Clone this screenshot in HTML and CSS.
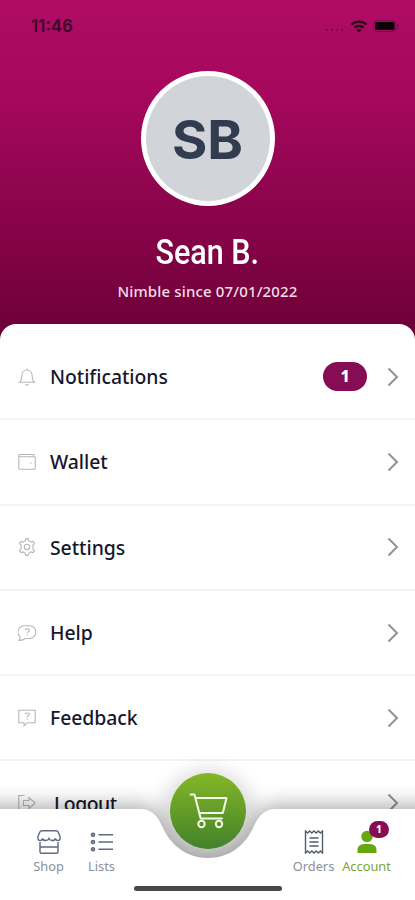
FILE: index.html
```html
<!DOCTYPE html>
<html lang="en">
  <head>
    <meta charset="UTF-8" />
    <meta name="viewport" content="width=device-width, initial-scale=1.0" />
    <title>Account</title>
    <link rel="stylesheet" href="styles.css">
  </head>
  <body>
    <div class="screen">
      <header class="profile">
        <div class="status-bar">
          <span class="time">11:46</span>
          <div class="status-icons">
            <svg width="20" height="4" viewBox="0 0 20 4" fill="#7d0a49"><circle cx="2" cy="2" r="1.200"/><circle cx="7" cy="2" r="1.200"/><circle cx="12" cy="2" r="1.200"/><circle cx="17" cy="2" r="1.200"/></svg>
            <svg class="wifi" width="18" height="13" viewBox="0 0 18 13" fill="none" stroke="#29051b" stroke-width="2.200"><path d="M1.500 4.600a11 11 0 0 1 15 0M4.400 7.700a6.800 6.800 0 0 1 9.200 0"/><path d="M9 12.400 6.500 9.900a3.800 3.800 0 0 1 5 0z" fill="#29051b" stroke="none"/></svg>
            <svg width="27" height="12" viewBox="0 0 27 12"><rect x=".6" y=".6" width="22.400" height="10.800" rx="3" fill="none" stroke="#7d0a49"/><rect x="2" y="2" width="19.500" height="8" rx="1.500" fill="#0c0208"/><path d="M24.300 4v4q1.600-.6 1.600-2t-1.600-2" fill="#7d0a49"/></svg>
          </div>
        </div>
        <div class="avatar"><span>SB</span></div>
        <h1 class="name">Sean B.</h1>
        <p class="since">Nimble since 07/01/2022</p>
      </header>

      <main class="menu">
        <a class="item">
          <svg class="icon" viewBox="0 0 18 18"><path d="M1.500 14.300c2-1.500 2.200-3.300 2.300-6.300C3.900 4.500 6 2 9 2s5.100 2.500 5.200 6c.1 3 .3 4.800 2.300 6.300zM7.400 16.200q1.600 1.800 3.200 0M9 .4V2"/></svg>
          <span class="label">Notifications</span>
          <span class="count">1</span>
          <svg class="chevron" viewBox="0 0 12 20"><path d="M1.500 1.500 10 10l-8.500 8.500"/></svg>
        </a>
        <a class="item">
          <svg class="icon" viewBox="0 0 18 18"><path d="M.8 2.200V15q0 1.300 1.300 1.300h13.800q1.300 0 1.300-1.300V5q0-1.300-1.300-1.300H2.300Q.8 3.700.8 2.200q0-.7 1-.7h14v2M13 9.500v1.200"/></svg>
          <span class="label">Wallet</span>
          <svg class="chevron" viewBox="0 0 12 20"><path d="M1.500 1.500 10 10l-8.500 8.500"/></svg>
        </a>
        <a class="item">
          <svg class="icon" viewBox="0 0 18 18"><path d="m7.300 2.700.6-2.100h2.200l.6 2.100 2.400 1.400 2.200-.6 1.200 2-1.600 1.600v3.800l1.600 1.600-1.200 2-2.200-.6-2.400 1.400-.6 2.100H7.900l-.6-2.100-2.400-1.400-2.200.6-1.200-2 1.600-1.600V7.100L1.500 5.500l1.200-2 2.200.6z"/><circle cx="9" cy="9" r="2.700"/></svg>
          <span class="label">Settings</span>
          <svg class="chevron" viewBox="0 0 12 20"><path d="M1.500 1.500 10 10l-8.500 8.500"/></svg>
        </a>
        <a class="item">
          <svg class="icon" viewBox="0 0 18 18"><path d="M6.500 1.700h5a5.800 5.800 0 0 1 0 12.800H7.200Q4.500 16.800.8 16.300q2-1.500 1.300-3.600A6.300 6.300 0 0 1 6.500 1.700zM7 6.300q0-1.400 2.200-1.400t2.200 1.400c0 1.400-2.200 1.200-2.200 3M9.200 10.500v1.100"/></svg>
          <span class="label">Help</span>
          <svg class="chevron" viewBox="0 0 12 20"><path d="M1.500 1.500 10 10l-8.500 8.500"/></svg>
        </a>
        <a class="item">
          <svg class="icon" viewBox="0 0 18 18"><path d="M.8 1.200h16.400v12.500H9.500l-3.400 3v-3H.8zM7 5.300q0-1.300 2.200-1.300t2.200 1.300c0 1.400-2.200 1.200-2.200 3M9.200 9.500v1.200"/></svg>
          <span class="label">Feedback</span>
          <svg class="chevron" viewBox="0 0 12 20"><path d="M1.500 1.500 10 10l-8.500 8.500"/></svg>
        </a>
        <a class="item item-logout">
          <svg class="icon" viewBox="0 0 18 18"><path d="M6.500 1.500H.8v15h5.700M5.500 6.500H11V3.500L17.200 9 11 14.500v-3H5.500z"/></svg>
          <span class="label">Logout</span>
          <svg class="chevron" viewBox="0 0 12 20"><path d="M1.500 1.500 10 10l-8.500 8.500"/></svg>
        </a>
      </main>

      <nav class="tab-bar">
        <svg class="tab-shape" viewBox="0 0 415 91">
          <circle class="tab-glow" cx="208" cy="9" r="48"/>
          <path class="tab-fill" d="M-30 0H140C151 0 157 6 162 17C171 37 187 49 208 49S245 37 254 17C259 6 265 0 276 0H445V91H-30Z"/>
        </svg>
        <div class="tabs">
          <a class="tab tab-shop">
            <svg width="24" height="24" viewBox="0 0 24 24" fill="none" stroke="#60687f" stroke-width="1.400"><path d="M5 .8h14q1.500 0 2.300 1.500L23 6.300v2.200q0 2-2 2t-2.600-2q-.4 2-3 2t-3.400-2q-.8 2-3.400 2t-3-2q-.6 2-2.600 2t-2-2V6.300l1.700-4Q3.500.8 5 .8zM3 12v9.700q0 1.500 1.500 1.500h15q1.500 0 1.500-1.500V12M3 17h18"/></svg>
            <span>Shop</span>
          </a>
          <a class="tab tab-lists">
            <svg width="24" height="24" viewBox="0 0 24 24" fill="none" stroke="#60687f" stroke-width="1.400"><path d="M8.500 4.800H23M8.500 12H23M8.500 19.200H23"/><g fill="#9298a9"><circle cx="3" cy="4.800" r="1.600"/><circle cx="3" cy="12" r="1.600"/><circle cx="3" cy="19.200" r="1.600"/></g></svg>
            <span>Lists</span>
          </a>
          <a class="tab tab-orders">
            <svg width="20" height="24" viewBox="0 0 20 24" fill="none" stroke="#535d6e" stroke-width="1.400"><path d="m1.500 1 2.200 2 2-2 2.100 2L10 1l2.200 2 2.100-2 2 2 2.200-2v22l-2.200-2-2 2-2.100-2-2.200 2-2.200-2-2.100 2-2-2-2.200 2zM5.500 8h9M5.500 12h9M5.500 16h9"/></svg>
            <span>Orders</span>
          </a>
          <a class="tab tab-account">
            <svg width="20" height="24" viewBox="0 0 20 24" fill="#68a611"><circle cx="10" cy="6.500" r="5.700"/><path d="M.5 23v-2.500Q.5 14 7 14h6q6.500 0 6.500 6.500V23z"/></svg>
            <span>Account</span>
            <b class="tab-badge">1</b>
          </a>
        </div>
        <a class="cart">
          <svg width="39" height="36" viewBox="0 0 39 36" fill="none" stroke="#f4fbe6" stroke-width="2" stroke-linejoin="round" stroke-linecap="round"><path d="M1.500 1.500h4l6.200 24M7 5h30.500l-3.700 15H10.600M11.700 25.500H33"/><circle cx="12.500" cy="31" r="3.200"/><circle cx="30" cy="31" r="3.200"/></svg>
        </a>
        <div class="home-bar"></div>
      </nav>
    </div>
  </body>
</html>
```
FILE: styles.css
```css
* {
  box-sizing: border-box;
}

body {
  margin: 0;
  font-family: "Noto Sans", sans-serif;
}

.screen {
  position: relative;
  width: 415px;
  height: 900px;
  overflow: hidden;
  background: #ffffff;
}

.profile {
  display: flex;
  flex-direction: column;
  align-items: center;
  height: 345px;
  background: linear-gradient(#b00c66 0%, #a5085c 28%, #70003a 94%);
  color: #ffffff;
}

.status-bar {
  display: flex;
  justify-content: space-between;
  align-items: center;
  width: 100%;
  height: 52px;
  padding: 0 15px 0 31px;
}

.time {
  color: #3a0626;
  font-family: Inter, sans-serif;
  font-size: 17px;
  font-weight: 600;
}

.status-icons {
  display: flex;
  align-items: center;
  gap: 5px;
}

.status-icons svg:first-child {
  margin-top: 8px;
}

.avatar {
  display: flex;
  flex-shrink: 0;
  justify-content: center;
  align-items: center;
  width: 134px;
  height: 135px;
  margin-top: 19px;
  border: 5px solid #ffffff;
  border-radius: 50%;
  background: #d1d5da;
  color: #313d4f;
  font-family: Inter, sans-serif;
  font-size: 54px;
  font-weight: 700;
}

.avatar span {
  padding-top: 2px;
}

.name {
  height: 40px;
  margin: 26px 0 0;
  font-family: Roboto, sans-serif;
  font-size: 35.5px;
  font-weight: 500;
  line-height: 40px;
  transform: scaleX(0.86);
}

.since {
  margin: 8px 0 0;
  color: #f3dfe5;
  font-size: 15px;
  font-weight: 500;
  letter-spacing: 0.15px;
  line-height: 22px;
  white-space: nowrap;
}

.menu {
  position: relative;
  height: 576px;
  margin-top: -21px;
  padding-top: 11px;
  border-radius: 16px 16px 0 0;
  background: #ffffff;
}

.item {
  display: flex;
  align-items: center;
  height: 85.3px;
  padding: 0 16px 0 18px;
  border-bottom: 2px solid #f3f3f4;
  color: #17172b;
}

.item-logout {
  border-bottom-color: transparent;
}

.icon {
  width: 18px;
  height: 18px;
  fill: none;
  stroke: #b5b7bd;
  stroke-width: 1.1;
}

.label {
  flex: 1;
  margin-left: 14px;
  font-size: 19.4px;
  font-weight: 460;
  letter-spacing: -0.05px;
}

.item-logout .label {
  margin-left: 18px;
  letter-spacing: -0.5px;
}

.count {
  width: 44px;
  height: 29px;
  margin-right: 20px;
  border-radius: 15px;
  background: #860c53;
  color: #ffffff;
  font-size: 16px;
  font-weight: 800;
  line-height: 29px;
  text-align: center;
}

.chevron {
  width: 12px;
  height: 20px;
  fill: none;
  stroke: #909398;
  stroke-width: 2;
}

.tab-bar {
  position: absolute;
  left: 0;
  bottom: 0;
  width: 415px;
  height: 91px;
  border-bottom: 1px solid #f1f1f1;
}

.tab-shape {
  position: absolute;
  width: 415px;
  height: 91px;
  overflow: visible;
}

.tab-glow {
  fill: rgba(0, 0, 0, 0.14);
  filter: blur(9px);
}

.tab-fill {
  fill: #ffffff;
  filter: drop-shadow(0 -4px 10px rgba(0, 0, 0, 0.33));
}

.tabs {
  position: relative;
  display: flex;
  padding: 21px 22px 0;
}

.tab {
  display: flex;
  flex-direction: column;
  align-items: center;
  width: 53px;
  color: #8a8f9d;
  font-size: 12.8px;
  line-height: 18px;
}

.tab span {
  margin-top: 3px;
}

.tab-orders {
  margin-left: auto;
}

.tab-account {
  position: relative;
  color: #7ba63a;
}

.tab-badge {
  position: absolute;
  top: -9px;
  left: 29px;
  width: 20px;
  height: 17px;
  border-radius: 9px;
  background: #860c53;
  color: #ffffff;
  font-size: 10px;
  font-weight: 800;
  line-height: 17px;
  text-align: center;
}

/* floats over the notch in the bar */
.cart {
  position: absolute;
  top: -36px;
  left: 170px;
  display: flex;
  justify-content: center;
  align-items: center;
  width: 76px;
  height: 76px;
  border-radius: 50%;
  background: linear-gradient(#84b726, #42812b);
}

.home-bar {
  position: absolute;
  left: 134px;
  bottom: 8px;
  width: 148px;
  height: 5px;
  border-radius: 3px;
  background: #494949;
}
```
